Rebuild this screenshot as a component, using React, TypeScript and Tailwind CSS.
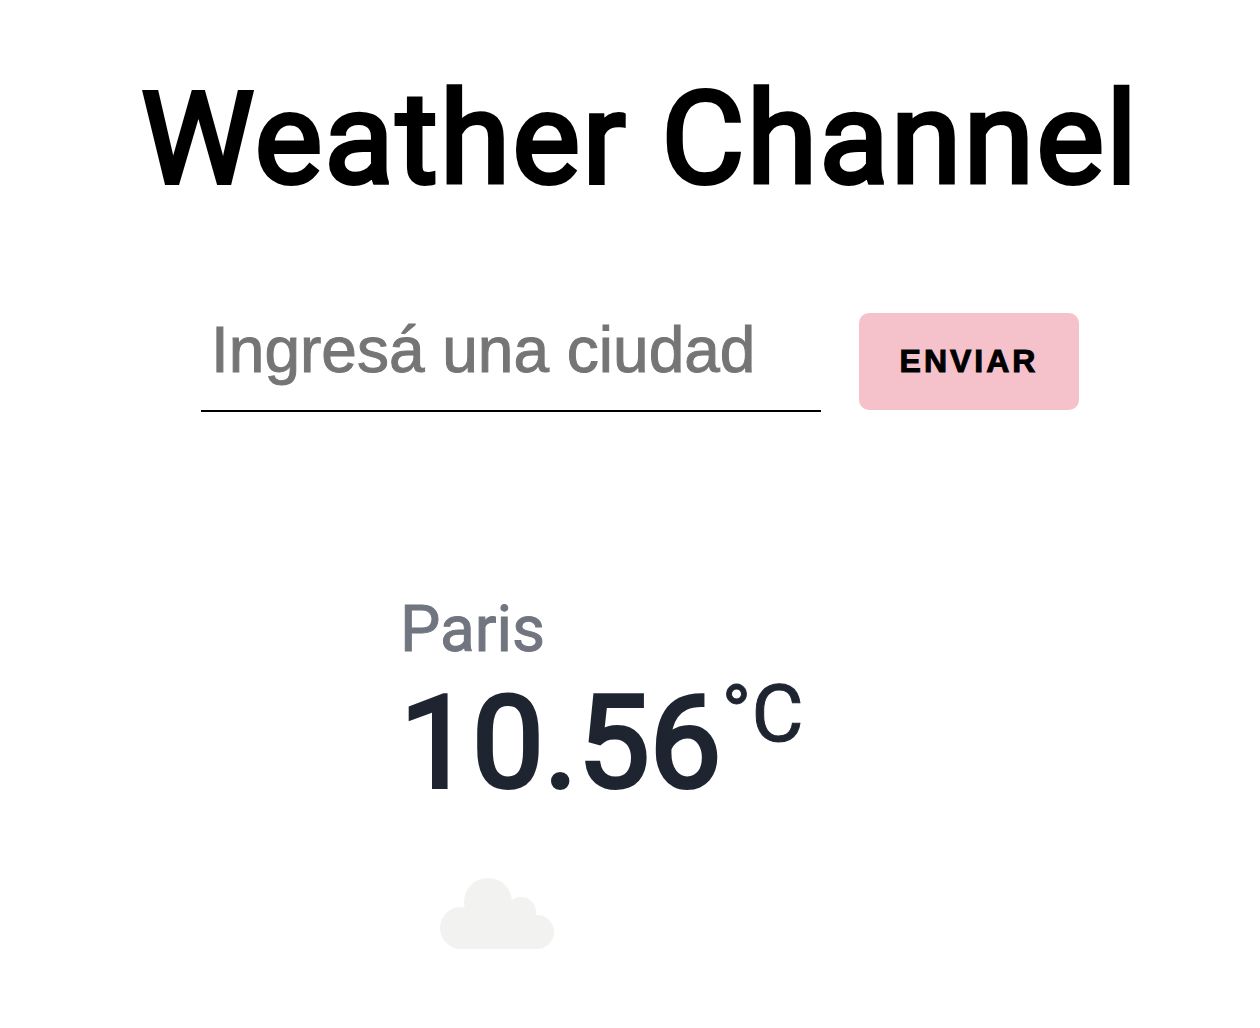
import { useState } from "react";

export default function App() {
  const [city, setCity] = useState("");
  return (
    <main className="min-h-screen bg-white pt-16 font-['Roboto',sans-serif]">
      <h1 className="pl-5 text-center text-[128px] leading-[150px] font-normal tracking-[2px] text-black [-webkit-text-stroke:4px_#000000]">Weather Channel</h1>
      <form className="mt-[82px] flex items-end justify-center gap-[38px] pl-5" onSubmit={(e) => e.preventDefault()}>
        <input
          type="text"
          aria-label="Ciudad"
          placeholder="Ingresá una ciudad"
          value={city}
          onChange={(e) => setCity(e.target.value)}
          className="h-[116px] w-[620px] border-b-2 border-black px-2.5 pb-1.5 font-['Liberation_Sans',sans-serif] text-[64px] text-black outline-none placeholder:text-[#757575] placeholder:[-webkit-text-stroke:1px_#757575]"
        />
        <button type="submit" className="mb-0.5 h-[97px] w-[220px] rounded-[10px] bg-[#f5c2cb] pb-0.5 font-['Liberation_Sans',sans-serif] text-[32px] font-bold tracking-[3px] text-black [-webkit-text-stroke:1px_#000000]">
          ENVIAR
        </button>
      </form>
      <section className="mx-auto mt-[172px] w-[460px]">
        <h2 className="text-[64px] leading-[92px] text-[#70757f] [-webkit-text-stroke:1px_#70757f]">Paris</h2>
        <div className="flex items-start">
          <span className="text-[128px] leading-[134px] font-normal text-[#1e2430] [-webkit-text-stroke:4px_#1e2430]">10.56</span>
          <sup className="top-0 text-[80px] leading-[76px] text-[#1e2430] [-webkit-text-stroke:1px_#1e2430]">°C</sup>
        </div>
        <svg className="mt-[68px] ml-10 h-[72px] w-[114px]" viewBox="0 0 114 72" fill="#f2f2f0" role="img" aria-label="Nublado">
          <circle cx="21" cy="50" r="21" />
          <circle cx="48" cy="24" r="24" />
          <circle cx="81" cy="34" r="15" />
          <circle cx="97" cy="54" r="17" />
          <path d="M21 71V40L30 28H90V45L97 50V71Z" />
        </svg>
      </section>
    </main>
  );
}
